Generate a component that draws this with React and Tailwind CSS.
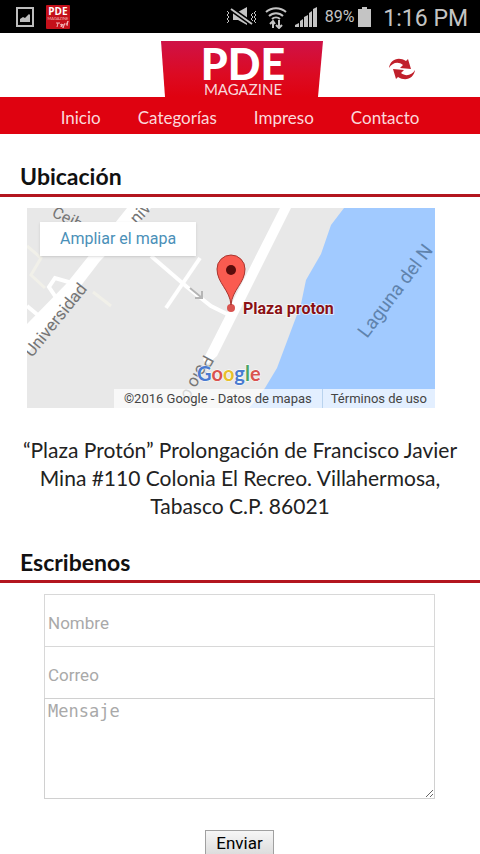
import React, { useState } from 'react'

const navItems = ['Inicio', 'Categorías', 'Impreso', 'Contacto']

const StatusBar = () => (
  <div className="flex h-[33px] items-center justify-between bg-black pl-4 pr-3 text-[#c4c4c4]">
    <div className="flex items-center gap-3">
      <svg className="h-5 w-[18px]" viewBox="0 0 18 20" aria-hidden="true">
        <rect x="1" y="1" width="16" height="18" fill="none" stroke="#bdbdbd" strokeWidth="2" />
        <path d="M4 15v-3l3-2 2 1 4-4 1 1v7z" fill="#bdbdbd" />
      </svg>
      <svg className="h-6 w-6" viewBox="0 0 24 24" aria-hidden="true">
        <rect width="24" height="24" rx="1" fill="#c4101a" />
        <text x="12" y="10" textAnchor="middle" fontSize="10" fontWeight="700" fill="#ffffff" fontFamily="Open Sans, sans-serif">PDE</text>
        <text x="12" y="15" textAnchor="middle" fontSize="4" fill="#f3b5b8" fontFamily="Lato, sans-serif">MAGAZINE</text>
        <path d="M10 18h4M12 18l-1 4M14 20l2-1-1 3 2-3 0 4 2-5M20 20l2-4-1 5" fill="none" stroke="#f3b5b8" strokeWidth="1" />
      </svg>
    </div>
    <div className="flex items-center gap-2">
      <svg className="h-5 w-[31px]" viewBox="0 0 31 20" aria-hidden="true">
        <path d="M1 4l2 2-2 2 2 2-2 2 2 2-2 2M30 4l-2 2 2 2-2 2 2 2-2 2 2 2M27 6l-2 2 2 2-2 2 2 2" fill="none" stroke="#c4c4c4" strokeWidth="1" />
        <path d="M7 5h5l9-5v18l-9-5H7z" fill="#c4c4c4" />
        <path d="M5 2l21 15" stroke="#000000" strokeWidth="5" />
        <path d="M5 2l21 15" stroke="#c4c4c4" strokeWidth="2" />
      </svg>
      <svg className="h-6 w-[22px]" viewBox="0 0 22 24" aria-hidden="true">
        <path d="M1 7a15 15 0 0 1 20 0M4 11a10 10 0 0 1 14 0M7 14a6 6 0 0 1 8 0" fill="none" stroke="#c4c4c4" strokeWidth="2" />
        <path d="M8 23v-6M5 19l3-3 2 3M14 15v6M11 20l3 3 3-3" fill="none" stroke="#c4c4c4" strokeWidth="2" />
      </svg>
      <svg className="h-5 w-[22px]" viewBox="0 0 22 20" aria-hidden="true">
        <path d="M0 20v-2l4-2v4zM5 20v-6l3-2v8zM9 20V10l4-2v12zM14 20V6l3-2v16zM18 20V2l4-2v20z" fill="#c4c4c4" />
      </svg>
      <div className="flex items-center gap-1">
        <span className="font-[Roboto] text-base">89%</span>
        <svg className="h-5 w-[13px]" viewBox="0 0 13 20" aria-hidden="true">
          <path d="M4 0h5v2h4v18H0V2h4z" fill="#c4c4c4" />
        </svg>
      </div>
      <span className="pt-1 pl-1 font-[Roboto] text-[23px] leading-7">1:16 PM</span>
    </div>
  </div>
)

const Logo = () => (
  <svg className="block h-14 w-[162px]" viewBox="0 0 162 56" role="img" aria-label="PDE Magazine">
    <defs>
      <linearGradient id="logoFill" x1="0" y1="0" x2="0" y2="1">
        <stop offset="0" stopColor="#cf1247" />
        <stop offset="0.6" stopColor="#dc0a22" />
        <stop offset="1" stopColor="#df0210" />
      </linearGradient>
    </defs>
    <path d="M0 0H162L157 56H4z" fill="url(#logoFill)" />
    <text x="82" y="39" textAnchor="middle" fontSize="43" fontWeight="900" fill="#ffffff" fontFamily="Lato, sans-serif">PDE</text>
    <text x="82" y="54" textAnchor="middle" fontSize="15" fill="#f8d9dc" fontFamily="Lato, sans-serif">MAGAZINE</text>
  </svg>
)

const SectionTitle = ({ children }) => (
  <h2 className="border-b-3 border-[#b3161f] px-5 pb-1 font-[Lato] text-[23px] leading-7 font-bold text-[#111111]">
    {children}
  </h2>
)

const MapDrawing = () => (
  <svg className="block h-full w-full" viewBox="0 0 408 200" preserveAspectRatio="xMidYMid slice" aria-hidden="true">
    <rect width="408" height="200" fill="#e8e8e8" />
    {/* Lagoon */}
    <path d="M317 0L304 17 294 46 279 72 274 96 250 160 238 180 222 200H408V0z" fill="#a1caff" />
    {/* Minor streets */}
    <g fill="none" stroke="#ffffff">
      <path d="M124 48L160 79 184 98 200 106" strokeWidth="4" />
      <path d="M173 50L139 100" strokeWidth="4" />
      <path d="M0 98L12 108M45 75L28 70 22 79 30 91" strokeWidth="4" />
      <path d="M0 38L14 50 4 67 18 80M66 84L84 98" strokeWidth="3" stroke="#f1f0e9" />
    </g>
    {/* Avenues */}
    <path d="M0 116L40 75 100 0H124L73 53 53 79 0 146z" fill="#ffffff" />
    <path d="M253 0H264L190 148 181 156 176 152z" fill="#ffffff" />
    <path d="M163 80L174 89M168 90h7v-7" fill="none" stroke="#b5b5b5" strokeWidth="2" />
    <g fontFamily="Roboto, sans-serif" fontSize="17" fill="#757575">
      <text transform="translate(5 150) rotate(-51)">Universidad</text>
      <text transform="translate(24 8) rotate(26)" fontSize="16">Ceib</text>
      <text transform="translate(110 17) rotate(-47)">niv</text>
      <text transform="translate(177 146) rotate(119)">Pólo c</text>
      <text transform="translate(340 131) rotate(-53)" fill="#5f83ad" fontSize="19">Laguna del N</text>
    </g>
    {/* Marker */}
    <circle cx="204" cy="100" r="4" fill="#d9534f" />
    <path d="M204 97C203 82 190 75 190 61a14 14 0 0 1 28 0c0 14-13 21-14 36z" fill="#fa5b50" stroke="#a8352f" />
    <circle cx="204" cy="62" r="5" fill="#5a0d0c" />
    <text x="216" y="106" fontFamily="Roboto, sans-serif" fontSize="16" fontWeight="700" fill="#8b1014" stroke="#ffffff" strokeOpacity="0.6" strokeWidth="2" paintOrder="stroke">Plaza proton</text>
    <text x="170" y="173" fontFamily="Lato, sans-serif" fontSize="20" fontWeight="700" stroke="#ffffff" strokeWidth="1" paintOrder="stroke">
      <tspan fill="#4a7bd0">G</tspan>
      <tspan fill="#d9534f">o</tspan>
      <tspan fill="#e8c02c">o</tspan>
      <tspan fill="#4a7bd0">g</tspan>
      <tspan fill="#4aa564">l</tspan>
      <tspan fill="#d9534f">e</tspan>
    </text>
  </svg>
)

const Contacto = () => {
  const [form, setForm] = useState({ nombre: '', correo: '', mensaje: '' })

  const handleChange = (e) => {
    const { name, value } = e.target
    setForm({ ...form, [name]: value })
  }

  const handleSubmit = (e) => {
    e.preventDefault()
    setForm({ nombre: '', correo: '', mensaje: '' })
  }

  return (
    <form onSubmit={handleSubmit} className="flex flex-col pt-[11px] pr-[45px] pl-11 font-[Roboto] text-[17px] text-black">
      <input
        type="text"
        name="nombre"
        aria-label="Nombre"
        placeholder="Nombre"
        value={form.nombre}
        onChange={handleChange}
        className="h-[53px] border border-[#d8d8d8] px-[3px] pt-1 placeholder:text-[#a9a9a9]"
      />
      <input
        type="email"
        name="correo"
        aria-label="Correo"
        placeholder="Correo"
        value={form.correo}
        onChange={handleChange}
        className="-mt-px h-[53px] border border-[#d8d8d8] px-[3px] pt-1 placeholder:text-[#a9a9a9]"
      />
      <textarea
        name="mensaje"
        aria-label="Mensaje"
        placeholder="Mensaje"
        value={form.mensaje}
        onChange={handleChange}
        className="-mt-px h-[101px] border border-[#d0d0d0] px-[3px] font-['DejaVu_Sans_Mono'] text-[17px] leading-6 placeholder:text-[#a9a9a9]"
      />
      <button
        type="submit"
        className="mt-[31px] self-center border border-[#a0a0a0] bg-linear-to-b from-[#f6f6f6] to-[#dcdcdc] px-2.5 leading-6"
      >
        Enviar
      </button>
    </form>
  )
}

const App = () => {
  return (
    <div className="min-h-screen bg-white">
      <StatusBar />

      {/* Header */}
      <header>
        <div className="grid grid-cols-[1fr_auto_1fr] items-center pt-2 pl-1">
          <span />
          <Logo />
          <button type="button" aria-label="Actualizar" className="justify-self-center">
            <svg className="h-[22px] w-[26px]" viewBox="0 0 26 22" aria-hidden="true">
              <path d="M0 10C1 2 9-2 17 3l2-2 3 10-11-1 3-3C9 3 3 5 0 10z" fill="#c0202b" />
              <path d="M26 12c-1 8-9 12-17 7l-2 2L4 11l11 1-3 3c5 4 11 2 14-3z" fill="#c0202b" />
            </svg>
          </button>
        </div>
        <nav className="flex h-[37px] items-center justify-center gap-[37px] bg-[#df0210] pt-1 font-[Lato] text-[17px] leading-6 text-[#fbd9db]">
          {navItems.map((item) => (
            <a key={item} href="#">{item}</a>
          ))}
        </nav>
      </header>

      <main>
        <section className="pt-7">
          <SectionTitle>Ubicación</SectionTitle>
          <div className="relative mt-[11px] mr-[45px] ml-[27px] h-[200px] overflow-hidden">
            <MapDrawing />
            <a href="#" className="absolute top-3.5 left-[13px] bg-white px-5 py-1 font-[Roboto] text-base leading-[26px] text-[#4a90b8] shadow">
              Ampliar el mapa
            </a>
            <div className="absolute right-0 bottom-0 flex bg-white/70 font-[Roboto] text-[13px] leading-[19px] text-[#444444]">
              <span className="px-2.5">©2016 Google - Datos de mapas</span>
              <a href="#" className="border-l border-[#b9d3ee] px-2">Términos de uso</a>
            </div>
          </div>
          <p className="px-4 pt-7 text-center font-[Lato] text-[21px] leading-7 text-[#222222]">
            “Plaza Protón” Prolongación de Francisco Javier Mina #110 Colonia El Recreo. Villahermosa, Tabasco C.P. 86021
          </p>
        </section>

        <section className="pt-7">
          <SectionTitle>Escribenos</SectionTitle>
          <Contacto />
        </section>
      </main>
    </div>
  )
}

export default App
